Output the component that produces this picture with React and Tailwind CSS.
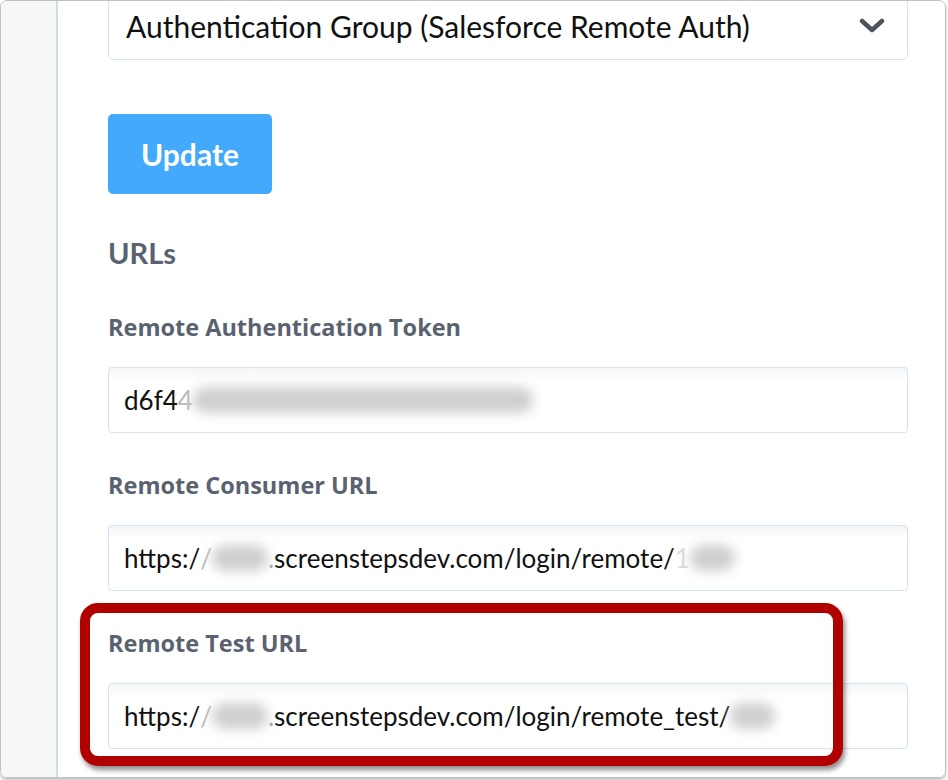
import React from "react";

const Blur = ({ w }) => (
  <span className={`inline-block ${w} h-[26px] align-middle bg-[#cfcfcf] blur-[6px] rounded-full`} />
);

const Field = ({ label, children, first }) => (
  <div className={first ? "mt-[41px]" : "mt-[37px]"}>
    <div className="h-[30px] leading-[30px] text-[23.5px] font-bold text-[#5a6270]" style={{ fontFamily: "'Open Sans', sans-serif" }}>
      {label}
    </div>
    <div className="mt-[25px] h-[66px] border border-[#d3e4f5] rounded-[4px] flex items-center pl-[15px] text-[26px] text-[#111] bg-gradient-to-b from-[#f3f5f7] to-white to-[20%] whitespace-nowrap overflow-hidden">
      {children}
    </div>
  </div>
);

export default function App() {
  return (
    <div className="w-[948px] h-[780px] bg-white" style={{ fontFamily: "Lato, 'Open Sans', sans-serif" }}>
      <div className="w-[946px] h-[778px] border border-[#c2c2c2] rounded-[7px] shadow-[0_2px_3px_rgba(0,0,0,0.25)] overflow-hidden flex relative">
        <div className="w-[57px] bg-[#f6f7f9] border-r-2 border-[#d6dce4]" />
        <div className="flex-1 pl-[50px] pr-[37px]">
          <div className="-mt-[8px] h-[67px] border border-[#d3e4f5] rounded-[5px] flex items-center justify-between pl-[17px] pr-[22px]">
            <span className="text-[30px] text-[#111]">Authentication Group (Salesforce Remote Auth)</span>
            <svg width="26" height="16" viewBox="0 0 26 16" className="mt-[-2px]">
              <path d="M3 3 L13 12 L23 3" fill="none" stroke="#4d535d" strokeWidth="4.5" strokeLinecap="round" strokeLinejoin="round" />
            </svg>
          </div>
          <button className="mt-[54px] w-[164px] h-[80px] bg-[#42a9fc] rounded-[5px] text-white font-bold text-[30px]">
            Update
          </button>
          <div className="mt-[41px] h-[36px] leading-[36px] text-[29px] font-bold text-[#5a6270]">URLs</div>
          <Field label="Remote Authentication Token" first>
            <span>d6f4</span>
            <span className="text-[#bbb]">4</span>
            <Blur w="w-[340px]" />
          </Field>
          <Field label="Remote Consumer URL">
            <span>https:/</span>
            <span className="text-[#bbb]">/</span>
            <Blur w="w-[56px]" />
            <span className="text-[#aaa]">.</span>
            <span>screenstepsdev.com/login/remote/</span>
            <span className="text-[#ddd]">1</span>
            <Blur w="w-[45px]" />
          </Field>
          <Field label="Remote Test URL">
            <span>https:/</span>
            <span className="text-[#bbb]">/</span>
            <Blur w="w-[56px]" />
            <span className="text-[#aaa]">.</span>
            <span>screenstepsdev.com/login/remote_test/</span>
            <Blur w="w-[45px]" />
          </Field>
        </div>
        <div className="absolute left-[79px] top-[602px] w-[763px] h-[163px] border-[10px] border-[#b00000] rounded-[18px] shadow-[2px_4px_5px_rgba(0,0,0,0.45)] pointer-events-none" />
      </div>
    </div>
  );
}
